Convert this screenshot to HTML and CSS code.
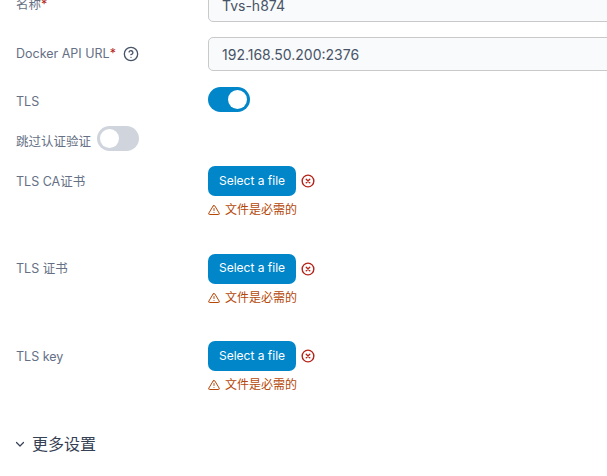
FILE: index.html
```html
<!DOCTYPE html>
<html lang="zh">
<head>
<meta charset="utf-8">
<title>Docker API</title>
<link rel="stylesheet" href="styles.css">
</head>
<body>
<form class="form">
  <div class="row row-input row-first">
    <label class="label">名称<span class="req">*</span></label>
    <input class="input" value="Tvs-h874">
  </div>
  <div class="row row-input">
    <label class="label">Docker API URL<span class="req">*</span>
      <svg class="help" viewBox="0 0 24 24" width="16" height="16" fill="none" stroke="#475467" stroke-width="2" stroke-linecap="round" stroke-linejoin="round"><circle cx="12" cy="12" r="10"/><path d="M9.1 9a3 3 0 0 1 5.8 1c0 2-3 3-3 3"/><path d="M12 17h.01"/></svg>
    </label>
    <input class="input" value="192.168.50.200:2376">
  </div>
  <div class="row row-switch">
    <label class="label">TLS</label>
    <span class="switch on"></span>
  </div>
  <div class="row-inline">
    <label class="label label-inline">跳过认证验证</label>
    <span class="switch"></span>
  </div>
  <div class="row row-file">
    <label class="label">TLS CA证书</label>
    <div class="file">
      <div class="file-top">
        <button type="button" class="btn">Select a file</button>
        <svg class="x" viewBox="0 0 24 24" width="14" height="14" fill="none" stroke="#b42318" stroke-width="2.4" stroke-linecap="round"><circle cx="12" cy="12" r="10"/><path d="M15 9l-6 6M9 9l6 6"/></svg>
      </div>
      <div class="err">
        <svg viewBox="0 0 24 24" width="12" height="12" fill="none" stroke="#b54708" stroke-width="2" stroke-linecap="round" stroke-linejoin="round"><path d="M10.3 3.9 1.8 18a2 2 0 0 0 1.7 3h17a2 2 0 0 0 1.7-3L13.7 3.9a2 2 0 0 0-3.4 0z"/><path d="M12 9v4M12 17h.01"/></svg>
        <span>文件是必需的</span>
      </div>
    </div>
  </div>
  <div class="row row-file">
    <label class="label">TLS 证书</label>
    <div class="file">
      <div class="file-top">
        <button type="button" class="btn">Select a file</button>
        <svg class="x" viewBox="0 0 24 24" width="14" height="14" fill="none" stroke="#b42318" stroke-width="2.4" stroke-linecap="round"><circle cx="12" cy="12" r="10"/><path d="M15 9l-6 6M9 9l6 6"/></svg>
      </div>
      <div class="err">
        <svg viewBox="0 0 24 24" width="12" height="12" fill="none" stroke="#b54708" stroke-width="2" stroke-linecap="round" stroke-linejoin="round"><path d="M10.3 3.9 1.8 18a2 2 0 0 0 1.7 3h17a2 2 0 0 0 1.7-3L13.7 3.9a2 2 0 0 0-3.4 0z"/><path d="M12 9v4M12 17h.01"/></svg>
        <span>文件是必需的</span>
      </div>
    </div>
  </div>
  <div class="row row-file">
    <label class="label">TLS key</label>
    <div class="file">
      <div class="file-top">
        <button type="button" class="btn">Select a file</button>
        <svg class="x" viewBox="0 0 24 24" width="14" height="14" fill="none" stroke="#b42318" stroke-width="2.4" stroke-linecap="round"><circle cx="12" cy="12" r="10"/><path d="M15 9l-6 6M9 9l6 6"/></svg>
      </div>
      <div class="err">
        <svg viewBox="0 0 24 24" width="12" height="12" fill="none" stroke="#b54708" stroke-width="2" stroke-linecap="round" stroke-linejoin="round"><path d="M10.3 3.9 1.8 18a2 2 0 0 0 1.7 3h17a2 2 0 0 0 1.7-3L13.7 3.9a2 2 0 0 0-3.4 0z"/><path d="M12 9v4M12 17h.01"/></svg>
        <span>文件是必需的</span>
      </div>
    </div>
  </div>
  <div class="more">
    <svg viewBox="0 0 24 24" width="12" height="12" fill="none" stroke="#344054" stroke-width="2.4" stroke-linecap="round" stroke-linejoin="round"><path d="M5 9l7 7 7-7"/></svg>
    <span>更多设置</span>
  </div>
  <div class="next">设置设置</div>
</form>
</body>
</html>
```
FILE: styles.css
```css
* { box-sizing: border-box; }
html, body {
  margin: 0;
  height: 476px;
  overflow: hidden;
  background: #fff;
}
body {
  font-family: Inter, "Noto Sans CJK SC", sans-serif;
  font-size: 12.5px;
  color: #667085;
}
.form {
  margin-top: -12px;
  padding-left: 16px;
}
.row {
  display: grid;
  grid-template-columns: 192px 1fr;
}
.row-input {
  height: 34px;
  margin-bottom: 16px;
  align-items: center;
}
.row-first { margin-bottom: 15px; }
.label {
  font-size: 12.5px;
  line-height: 16px;
  color: #667085;
  display: flex;
  align-items: center;
}
.req { color: #b42318; }
.help { margin-left: 7px; }
.input {
  width: 420px;
  height: 34px;
  padding: 0 13px;
  border: 1px solid #c9c9c9;
  border-radius: 5px;
  background: #f9fafb;
  font: 14px Inter, sans-serif;
  color: #475467;
}
.row-switch {
  height: 25px;
  margin-bottom: 15px;
}
.row-switch .label { height: 30px; }
.row-inline {
  display: flex;
  align-items: center;
  gap: 6px;
  height: 25px;
  margin-bottom: 15px;
  margin-top: -1px;
}
.label-inline { margin-top: 7px; }
.switch {
  display: block;
  position: relative;
  width: 42px;
  height: 25px;
  border-radius: 13px;
  background: #d0d5dd;
}
.switch::after {
  content: "";
  position: absolute;
  top: 3px;
  left: 3px;
  width: 19px;
  height: 19px;
  border-radius: 50%;
  background: #fff;
}
.switch.on { background: #0086c9; }
.switch.on::after { left: 20px; }
.row-file {
  height: 87.5px;
}
.row-file .label { height: 31px; }
.file-top {
  display: flex;
  align-items: center;
  gap: 5px;
}
.btn {
  width: 88px;
  height: 30px;
  padding: 0 0 2px;
  border: 0;
  border-radius: 7px;
  background: #0086c9;
  color: #fff;
  font: 12px Inter, sans-serif;
}
.err {
  display: flex;
  align-items: center;
  gap: 5px;
  margin-top: 6px;
  font-size: 12px;
  line-height: 16px;
  color: #b54708;
}
.more {
  display: flex;
  align-items: center;
  gap: 6px;
  margin-top: 3px;
  margin-left: -2px;
  font-size: 16px;
  line-height: 24px;
  color: #344054;
}
.next {
  margin: 16px 0 0 50px;
  font-size: 14.5px;
  color: #667085;
}
```
